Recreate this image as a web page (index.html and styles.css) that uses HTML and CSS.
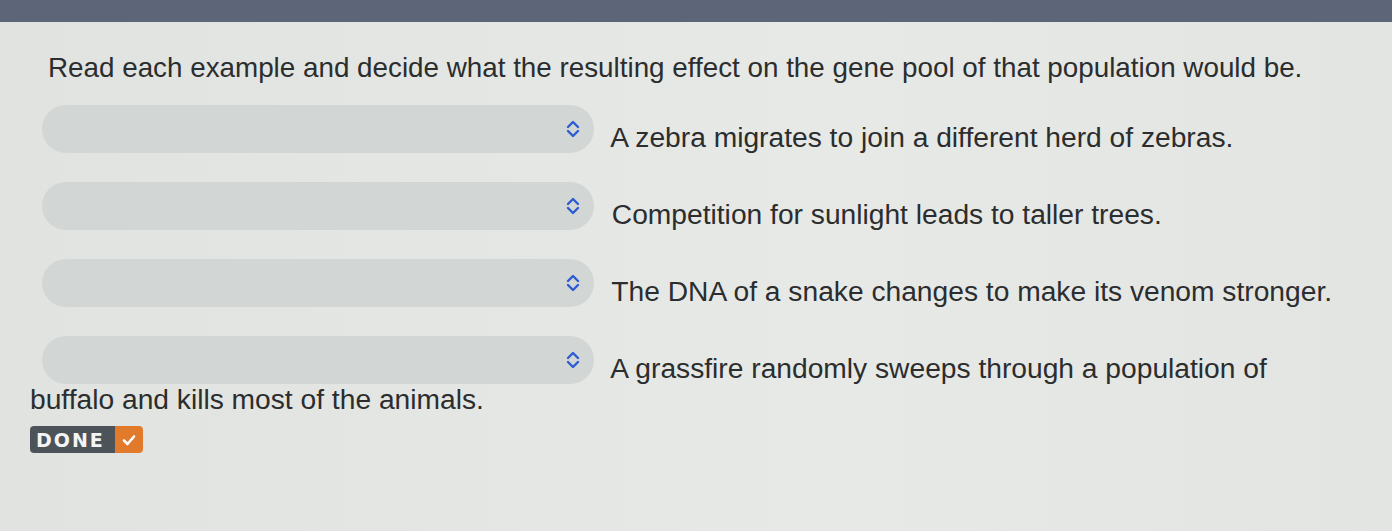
FILE: index.html
```html
<!DOCTYPE html>
<html lang="en">
<head>
    <meta charset="UTF-8">
    <title>Gene pool effects</title>
    <link rel="stylesheet" href="styles.css">
</head>
<body>
    <div class="top-bar"></div>
    <div class="panel">
        <p class="prompt">Read each example and decide what the resulting effect on the gene pool of that population would be.</p>

        <div class="item">
            <span class="picker"><svg class="chevron" viewBox="0 0 14 20" width="14" height="20"><path d="M2 8 L7 3 L12 8 M2 12 L7 17 L12 12" fill="none" stroke="#2d5bd3" stroke-width="2.4" stroke-linecap="round" stroke-linejoin="round"/></svg></span>
            A zebra migrates to join a different herd of zebras.
        </div>
        <div class="item">
            <span class="picker"><svg class="chevron" viewBox="0 0 14 20" width="14" height="20"><path d="M2 8 L7 3 L12 8 M2 12 L7 17 L12 12" fill="none" stroke="#2d5bd3" stroke-width="2.4" stroke-linecap="round" stroke-linejoin="round"/></svg></span>
            Competition for sunlight leads to taller trees.
        </div>
        <div class="item">
            <span class="picker"><svg class="chevron" viewBox="0 0 14 20" width="14" height="20"><path d="M2 8 L7 3 L12 8 M2 12 L7 17 L12 12" fill="none" stroke="#2d5bd3" stroke-width="2.4" stroke-linecap="round" stroke-linejoin="round"/></svg></span>
            The DNA of a snake changes to make its venom stronger.
        </div>
        <div class="item">
            <span class="picker"><svg class="chevron" viewBox="0 0 14 20" width="14" height="20"><path d="M2 8 L7 3 L12 8 M2 12 L7 17 L12 12" fill="none" stroke="#2d5bd3" stroke-width="2.4" stroke-linecap="round" stroke-linejoin="round"/></svg></span>
            A grassfire randomly sweeps through a population of buffalo and kills most of the animals.
        </div>

        <button class="done-button">
            <span class="done-label">DONE</span>
            <span class="done-check"><svg viewBox="0 0 16 16" width="16" height="16"><path d="M3 8.5 L6.5 12 L13 4.5" fill="none" stroke="#fff" stroke-width="2.6" stroke-linecap="round" stroke-linejoin="round"/></svg></span>
        </button>
    </div>
</body>
</html>
```

FILE: styles.css
```css
body {
    margin: 0;
    background: #5d6679;
    font-family: 'Liberation Sans', Arial, sans-serif;
    color: #2b2d2e;
}

.top-bar {
    height: 22px;
}

.panel {
    background: linear-gradient(to right, #e1e3e0, #e7e9e6 60%, #e3e5e2);
    height: 509px;
    padding: 28px 0 0 30px;
    box-sizing: border-box;
}

.prompt {
    margin: 0 0 0 18px;
    font-size: 27.8px;
    line-height: 36px;
}

.item {
    font-size: 28.2px;
    line-height: 30px;
    margin-top: 29px;
    width: 1322px;
}

.item:first-of-type {
    margin-top: 19px;
}

.picker {
    display: inline-flex;
    align-items: center;
    justify-content: flex-end;
    width: 552px;
    height: 48px;
    margin: 0 10px 0 12px;
    padding-right: 14px;
    box-sizing: border-box;
    background: #d2d6d4;
    border-radius: 24px;
    vertical-align: text-bottom;
}

.chevron {
    display: block;
}

.done-button {
    display: flex;
    margin-top: 12px;
    padding: 0;
    border: none;
    border-radius: 4px;
    overflow: hidden;
    height: 27px;
    cursor: pointer;
}

.done-label {
    display: flex;
    align-items: center;
    background: #4c5459;
    color: #f4f4f4;
    font-family: 'DejaVu Sans', sans-serif;
    font-weight: bold;
    font-size: 19px;
    letter-spacing: 2px;
    padding: 0 10px 0 6px;
}

.done-check {
    display: flex;
    align-items: center;
    justify-content: center;
    width: 28px;
    background: #e27a2c;
}
```
